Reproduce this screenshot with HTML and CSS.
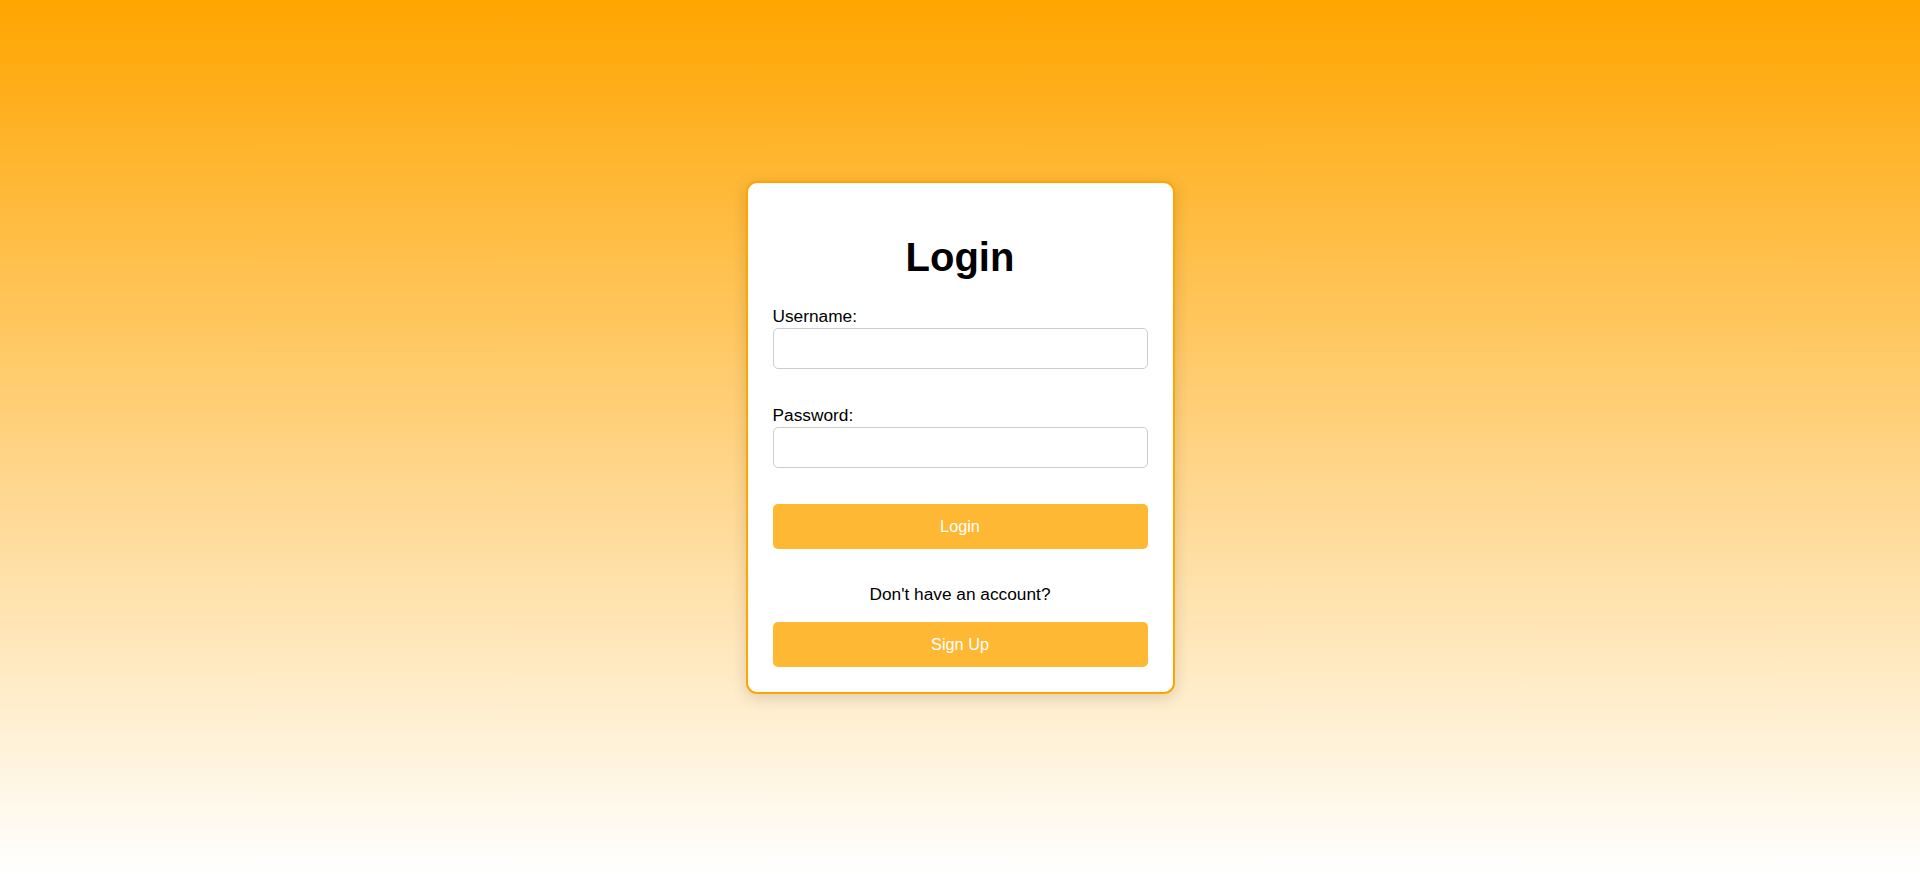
FILE: index.html
```html
<!DOCTYPE html>
<html lang="en">
<head>
<meta charset="utf-8">
<title>Login</title>
<link rel="stylesheet" href="styles.css">
</head>
<body>
  <main class="page">
    <div class="card">
      <h1 class="title">Login</h1>
      <form class="form">
        <div class="field">
          <label class="label" for="username">Username:</label>
          <input class="input" id="username" type="text">
        </div>
        <div class="field">
          <label class="label" for="password">Password:</label>
          <input class="input" id="password" type="password">
        </div>
        <button class="btn btn-login" type="button">Login</button>
      </form>
      <p class="prompt">Don't have an account?</p>
      <button class="btn" type="button">Sign Up</button>
    </div>
  </main>
</body>
</html>
```

FILE: styles.css
```css
* {
  box-sizing: border-box;
}

html, body {
  margin: 0;
  padding: 0;
  height: 100%;
}

body {
  font-family: "Liberation Sans", Arial, sans-serif;
  background: linear-gradient(to bottom, #ffa500 0%, #ffffff 100%);
  color: #000;
}

.page {
  height: 874px;
  display: flex;
  align-items: center;
  justify-content: center;
}

.card {
  width: 429px;
  background: #fff;
  border: 2px solid #ffa500;
  border-radius: 11px;
  padding: 25px;
  box-shadow: 0 4px 16px rgba(0, 0, 0, 0.14);
  display: flex;
  flex-direction: column;
}

.title {
  margin: 26px 0 27px;
  font-size: 40px;
  line-height: 46px;
  font-weight: bold;
  text-align: center;
}

.form {
  display: flex;
  flex-direction: column;
}

.field {
  display: flex;
  flex-direction: column;
  margin-bottom: 37px;
}

.field + .field {
  margin-bottom: 36px;
}

.label {
  font-size: 17.3px;
  line-height: 19px;
  margin-bottom: 2px;
}

.input {
  height: 41px;
  border: 1px solid #cccccc;
  border-radius: 5px;
  padding: 0 10px;
  font-size: 16px;
  font-family: inherit;
  background: #fff;
}

.btn {
  height: 45px;
  border: none;
  border-radius: 5px;
  background: #ffb833;
  color: #fff;
  font-family: "Liberation Sans", Arial, sans-serif;
  font-size: 16.3px;
  cursor: pointer;
}

.prompt {
  margin: 35px 0 18px;
  font-size: 17.3px;
  line-height: 20px;
  text-align: center;
}
```
